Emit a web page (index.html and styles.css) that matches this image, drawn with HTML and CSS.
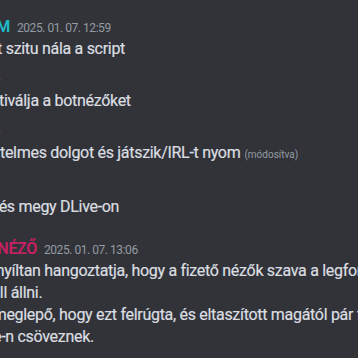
FILE: index.html
```html
<!DOCTYPE html>
<html lang="hu">
<head>
<meta charset="utf-8">
<title>Csevegés</title>
<link rel="stylesheet" href="styles.css">
</head>
<body>
<main class="chat">
  <section class="group">
    <div class="msg">
      <div class="line header in-10"><span class="hang"><span class="name teal">STREAM</span></span><time class="stamp">2025. 01. 07. 12:59</time></div>
      <div class="line in-2"><span class="hang"><span>és mert</span></span> szitu nála a script</div>
    </div>
    <div class="msg"><div class="line in-0"><span class="hang"><span>és akkor elindít</span></span></div></div>
    <div class="msg"><div class="line in-m1"><span class="hang"><span>ami ak</span></span>tiválja a botnézőket</div></div>
    <div class="msg"><div class="line in-0"><span class="hang"><span>amíg ő nem csinál semmit</span></span></div></div>
    <div class="msg"><div class="line in-0"><span class="hang"><span>vagy csinál valami ér</span></span>telmes dolgot és játszik/IRL-t nyom<span class="edited">(módosítva)</span></div></div>
    <div class="msg"><div class="line in-m3"><span class="hang"><span>közben pedig Kicken is fent van</span></span></div></div>
    <div class="msg"><div class="line in-m5"><span class="hang"><span>Twitchen</span></span> és megy DLive-on</div></div>
  </section>
  <section class="group">
    <div class="msg">
      <div class="line header in-37"><span class="hang"><span class="name pink">NÉZŐ</span></span><time class="stamp">2025. 01. 07. 13:06</time></div>
      <div class="line in-m8"><span class="hang"><span>A streamer</span></span> nyíltan hangoztatja, hogy a fizető nézők szava a legfontosabb, és hogy</div>
      <div class="line in-7"><span class="hang"><span>mögéjük kell</span></span> állni.</div>
      <div class="line in-m11"><span class="hang"><span>Ezért is</span></span> meglepő, hogy ezt felrúgta, és eltaszított magától pár fizető nézőt, akik most</div>
      <div class="line in-m7"><span class="hang"><span>YouTub</span></span>e-n csöveznek.</div>
    </div>
  </section>
</main>
</body>
</html>
```
FILE: styles.css
```css
* {
  box-sizing: border-box;
}

html,
body {
  margin: 0;
  height: 100%;
}

body {
  background: #313338;
  color: #dbdee1;
  font-family: Roboto, "Liberation Sans", sans-serif;
  font-size: 16px;
  overflow: hidden;
}

.chat {
  padding-top: 15px;
}

.group + .group {
  margin-top: 17px;
}

.msg {
  padding: 2px 0;
}

.line {
  line-height: 22px;
  white-space: nowrap;
  letter-spacing: -0.3px;
  -webkit-text-stroke: 0.2px currentColor;
}

.header {
  line-height: 20px;
}

.hang {
  display: inline-flex;
  width: 0;
  justify-content: flex-end;
  text-indent: 0;
  white-space: nowrap;
}

.name {
  font-weight: 500;
}

.teal {
  color: #1fbfcf;
}

.pink {
  color: #c91f67;
}

.stamp {
  font-size: 12px;
  color: #949ba4;
  margin-left: 7px;
  letter-spacing: -0.45px;
  -webkit-text-stroke: 0;
}

.edited {
  font-size: 10px;
  color: #949ba4;
  margin-left: 4px;
  letter-spacing: 0;
  -webkit-text-stroke: 0;
}

.in-0 { text-indent: 0; }
.in-2 { text-indent: 2px; }
.in-7 { text-indent: 7px; }
.in-10 { text-indent: 10px; }
.in-37 { text-indent: 37px; }
.in-m1 { text-indent: -1px; }
.in-m3 { text-indent: -3px; }
.in-m5 { text-indent: -5px; }
.in-m7 { text-indent: -7px; }
.in-m8 { text-indent: -8px; }
.in-m11 { text-indent: -11px; }
```
